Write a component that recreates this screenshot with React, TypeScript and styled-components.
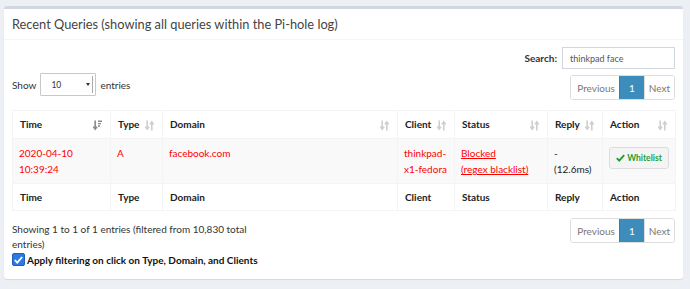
import React from 'react';
import styled, { createGlobalStyle } from 'styled-components';

const GlobalStyle = createGlobalStyle`
  html, body {
    margin: 0;
    padding: 0;
    background: #ecf0f5;
  }
  body {
    font-family: Lato, "Liberation Sans", sans-serif;
    font-size: 10px;
    color: #333;
  }
  * { box-sizing: border-box; }
`;

type Col = { label: string; width: number; sort: 'both' | 'desc' };

const COLUMNS: Col[] = [
  { label: 'Time', width: 98, sort: 'desc' },
  { label: 'Type', width: 52, sort: 'both' },
  { label: 'Domain', width: 235, sort: 'both' },
  { label: 'Client', width: 57, sort: 'both' },
  { label: 'Status', width: 93, sort: 'both' },
  { label: 'Reply', width: 55, sort: 'both' },
  { label: 'Action', width: 73, sort: 'both' },
];

const SortBoth: React.FC = () => (
  <svg width="9" height="11" viewBox="0 0 9 11">
    <path d="M2.2 0.5v8M0.3 6.6l1.9 2.6 1.9-2.6" stroke="#cfcfcf" strokeWidth="1.6" fill="none" />
    <path d="M6.8 10.5v-8M4.9 4.4l1.9-2.6 1.9 2.6" stroke="#cfcfcf" strokeWidth="1.6" fill="none" />
  </svg>
);

const SortDesc: React.FC = () => (
  <svg width="9" height="11" viewBox="0 0 9 11">
    <path d="M2.2 0.5v8M0.3 6.6l1.9 2.6 1.9-2.6" stroke="#8a8a8a" strokeWidth="1.6" fill="none" />
    <path d="M5 1.2h4M5 3.6h3M5 6h2" stroke="#8a8a8a" strokeWidth="1.4" fill="none" />
  </svg>
);

const Pager: React.FC = () => (
  <Pagination>
    <PageItem $disabled>Previous</PageItem>
    <PageItem $active>1</PageItem>
    <PageItem $disabled>Next</PageItem>
  </Pagination>
);

const App: React.FC = () => {
  return (
    <Page>
      <GlobalStyle />
      <Box>
        <BoxHeader>
          <BoxTitle>Recent Queries (showing all queries within the Pi-hole log)</BoxTitle>
        </BoxHeader>
        <BoxBody>
          <SearchRow>
            <SearchLabel>Search:</SearchLabel>
            <SearchInput type="search" value="thinkpad face" readOnly />
          </SearchRow>
          <ControlsRow>
            <LengthLabel>
              Show
              <Select>
                <span>10</span>
                <Caret />
              </Select>
              entries
            </LengthLabel>
            <Pager />
          </ControlsRow>

          <Table>
            <colgroup>
              {COLUMNS.map(c => (
                <col key={c.label} style={{ width: c.width }} />
              ))}
            </colgroup>
            <thead>
              <tr>
                {COLUMNS.map(c => (
                  <HeadCell key={c.label}>
                    {c.label}
                    <SortIcon>{c.sort === 'desc' ? <SortDesc /> : <SortBoth />}</SortIcon>
                  </HeadCell>
                ))}
              </tr>
            </thead>
            <tbody>
              <DataRow>
                <Cell $red>2020-04-10 10:39:24</Cell>
                <Cell $red>A</Cell>
                <Cell $red>facebook.com</Cell>
                <Cell $red>thinkpad-x1-fedora</Cell>
                <Cell>
                  <StatusLink href="#">
                    Blocked
                    <br />
                    (regex blacklist)
                  </StatusLink>
                </Cell>
                <Cell>
                  -
                  <br />
                  (12.6ms)
                </Cell>
                <Cell>
                  <WhitelistButton>
                    <svg width="9" height="8" viewBox="0 0 9 8">
                      <path d="M0.8 4.2l2.4 2.4 5-5.4" stroke="#1e9e2e" strokeWidth="1.9" fill="none" />
                    </svg>
                    Whitelist
                  </WhitelistButton>
                </Cell>
              </DataRow>
            </tbody>
            <tfoot>
              <tr>
                {COLUMNS.map(c => (
                  <FootCell key={c.label}>{c.label}</FootCell>
                ))}
              </tr>
            </tfoot>
          </Table>

          <BottomRow>
            <Info>Showing 1 to 1 of 1 entries (filtered from 10,830 total entries)</Info>
            <Pager />
          </BottomRow>
          <CheckRow>
            <CheckBox>
              <svg width="9" height="8" viewBox="0 0 9 8">
                <path d="M0.8 4l2.4 2.6 5-5.6" stroke="#fff" strokeWidth="1.8" fill="none" />
              </svg>
            </CheckBox>
            Apply filtering on click on Type, Domain, and Clients
          </CheckRow>
        </BoxBody>
      </Box>
    </Page>
  );
};

// Styled Components
const Page = styled.div`
  width: 690px;
  height: 289px;
  padding: 6px 7px 0 4px;
  overflow: hidden;
`;

const Box = styled.div`
  background: #fff;
  border-top: 3px solid #d2d6de;
  border-radius: 3px;
  box-shadow: 0 1px 1px rgba(0, 0, 0, 0.1);
  height: 273px;
`;

const BoxHeader = styled.div`
  height: 31px;
  padding: 0 8px;
  display: flex;
  align-items: center;
  border-bottom: 1px solid #f4f4f4;
`;

const BoxTitle = styled.h3`
  margin: 0;
  font-size: 12.8px;
  font-weight: 400;
  color: #444;
  white-space: nowrap;
`;

const BoxBody = styled.div`
  padding: 7px 8px 0;
`;

const SearchRow = styled.div`
  display: flex;
  justify-content: flex-end;
  align-items: center;
  gap: 5px;
`;

const SearchLabel = styled.span`
  font-weight: 700;
  font-size: 10px;
  color: #333;
`;

const SearchInput = styled.input`
  width: 113px;
  height: 22px;
  border: 1px solid #d2d6de;
  padding: 0 7px;
  font-family: inherit;
  font-size: 9px;
  color: #555;
  outline: none;
`;

const ControlsRow = styled.div`
  display: flex;
  justify-content: space-between;
  align-items: center;
  margin-top: 6px;
`;

const LengthLabel = styled.div`
  display: flex;
  align-items: center;
  gap: 4px;
  font-size: 10px;
  margin-top: -6px;
`;

const Select = styled.div`
  width: 56px;
  height: 23px;
  border: 1px solid #c8c8c8;
  border-radius: 1px;
  display: flex;
  align-items: center;
  justify-content: space-between;
  padding: 0 2px 0 10px;
  font-size: 8.5px;
  color: #333;
  background: #fff;
`;

const Caret = styled.span`
  width: 3px;
  height: 17px;
  border-right: 1px solid #aaa;
  position: relative;
  &::before {
    content: '';
    position: absolute;
    left: -4px;
    top: 7px;
    border-left: 2.5px solid transparent;
    border-right: 2.5px solid transparent;
    border-top: 3px solid #333;
  }
`;

const Pagination = styled.div`
  display: flex;
  border: 1px solid #ddd;
  border-radius: 3px;
  overflow: hidden;
  height: 25px;
`;

const PageItem = styled.span<{ $active?: boolean; $disabled?: boolean }>`
  display: flex;
  align-items: center;
  padding: 0 ${p => (p.$active ? 9 : 4)}px;
  font-size: 10px;
  color: ${p => (p.$active ? '#fff' : '#777')};
  background: ${p => (p.$active ? '#3c8dbc' : '#fff')};
  border-left: 1px solid ${p => (p.$active ? '#367fa9' : '#ddd')};
  &:first-child {
    border-left: none;
    padding-left: 6px;
  }
`;

const Table = styled.table`
  width: 663px;
  margin-top: 10px;
  border-collapse: collapse;
  table-layout: fixed;
  border: 1px solid #f4f4f4;
`;

const HeadCell = styled.th`
  position: relative;
  text-align: left;
  font-weight: 700;
  font-size: 10px;
  line-height: 15px;
  padding: 6px 7px;
  color: #222;
  border: 1px solid #f4f4f4;
`;

const SortIcon = styled.span`
  position: absolute;
  right: 8px;
  top: 9px;
  display: flex;
`;

const DataRow = styled.tr`
  background: #f9f9f9;
`;

const Cell = styled.td<{ $red?: boolean }>`
  vertical-align: top;
  font-size: 10px;
  line-height: 16px;
  padding: 6px 4px 6px 6px;
  color: ${p => (p.$red ? '#ff0000' : '#222')};
  border: 1px solid #f4f4f4;
`;

const StatusLink = styled.a`
  color: #ff0000;
  text-decoration: underline;
`;

const WhitelistButton = styled.span`
  display: inline-flex;
  align-items: center;
  gap: 2px;
  height: 22px;
  width: 60px;
  margin-top: 2px;
  justify-content: center;
  font-size: 8.5px;
  font-weight: 700;
  color: #1e9e2e;
  background: #f4f4f4;
  border: 1px solid #ddd;
  border-radius: 3px;
`;

const FootCell = styled.th`
  text-align: left;
  font-weight: 700;
  font-size: 10px;
  line-height: 14px;
  padding: 6px 7px;
  color: #222;
  border: 1px solid #f4f4f4;
`;

const BottomRow = styled.div`
  display: flex;
  justify-content: space-between;
  align-items: flex-start;
  margin-top: 7px;
`;

const Info = styled.div`
  width: 250px;
  font-size: 10px;
  line-height: 15px;
  padding-top: 4px;
  color: #333;
`;

const CheckRow = styled.label`
  display: flex;
  align-items: center;
  gap: 2px;
  font-weight: 700;
  font-size: 10px;
  color: #111;
  margin-top: 1px;
`;

const CheckBox = styled.span`
  width: 13px;
  height: 13px;
  border-radius: 2px;
  background: #2a7ae2;
  border: 1px solid #1f5fb5;
  display: flex;
  align-items: center;
  justify-content: center;
`;

export default App;
